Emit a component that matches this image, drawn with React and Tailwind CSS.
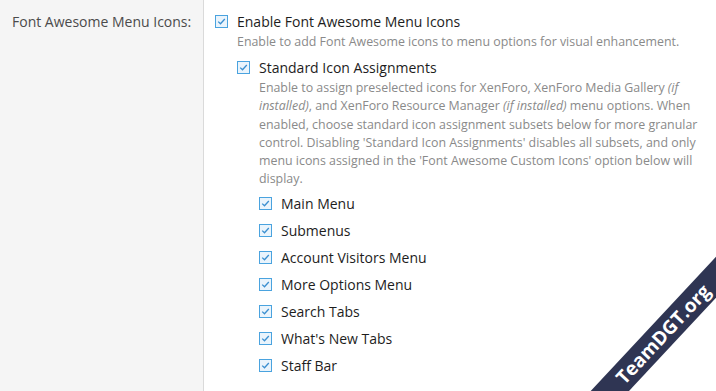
import React from "react";

function Box() {
  return (
    <span className="shrink-0 w-[13px] h-[13px] border border-[#4aa3df] bg-[#eaf4fc] flex items-center justify-center">
      <svg width="9" height="9" viewBox="0 0 9 9" fill="none">
        <path d="M1.2 4.6 L3.5 6.8 L7.8 2" stroke="#3b8fd0" strokeWidth="1.3" />
      </svg>
    </span>
  );
}

function Item({ children, cls = "" }) {
  return (
    <div className={"flex items-center gap-[9px] whitespace-nowrap " + cls}>
      <Box />
      <span>{children}</span>
    </div>
  );
}

export default function App() {
  const items = [
    "Main Menu",
    "Submenus",
    "Account Visitors Menu",
    "More Options Menu",
    "Search Tabs",
    "What's New Tabs",
    "Staff Bar",
  ];
  return (
    <div
      className="relative w-[716px] h-[391px] overflow-hidden bg-white flex"
      style={{ fontFamily: '"Open Sans", sans-serif' }}
    >
      <div className="w-[204px] shrink-0 bg-[#f5f5f5] border-r border-[#dadada] pl-[12px] pt-[11px] text-[14px] text-[#4b4b4b] whitespace-nowrap">
        Font Awesome Menu Icons:
      </div>
      <div className="pl-[11px] pt-[11px] text-[14px] text-[#1d1d1d]">
        <Item cls="h-[20px]">Enable Font Awesome Menu Icons</Item>
        <div className="pl-[22px]">
          <div className="text-[12.4px] text-[#8a8a8a] leading-[18px] mt-[2px] whitespace-nowrap">
            Enable to add Font Awesome icons to menu options for visual enhancement.
          </div>
          <Item cls="h-[20px] mt-[6px]">Standard Icon Assignments</Item>
          <div className="pl-[22px]">
            <div className="text-[12.4px] text-[#8a8a8a] leading-[18.3px] mt-[2px] whitespace-nowrap">
              Enable to assign preselected icons for XenForo, XenForo Media Gallery <i>(if</i>
              <br />
              <i>installed)</i>, and XenForo Resource Manager <i>(if installed)</i> menu options. When
              <br />
              enabled, choose standard icon assignment subsets below for more granular
              <br />
              control. Disabling 'Standard Icon Assignments' disables all subsets, and only
              <br />
              menu icons assigned in the 'Font Awesome Custom Icons' option below will
              <br />
              display.
            </div>
            <div className="flex flex-col mt-[1px]">
              {items.map((t) => (
                <Item key={t} cls="h-[27px]">
                  {t}
                </Item>
              ))}
            </div>
          </div>
        </div>
      </div>
      <div className="absolute left-[543px] top-[320px] w-[240px] h-[28px] bg-[#2f3553] -rotate-[47deg] flex items-center justify-center text-white font-bold text-[19px] leading-none">
        TeamDGT.org
      </div>
    </div>
  );
}
